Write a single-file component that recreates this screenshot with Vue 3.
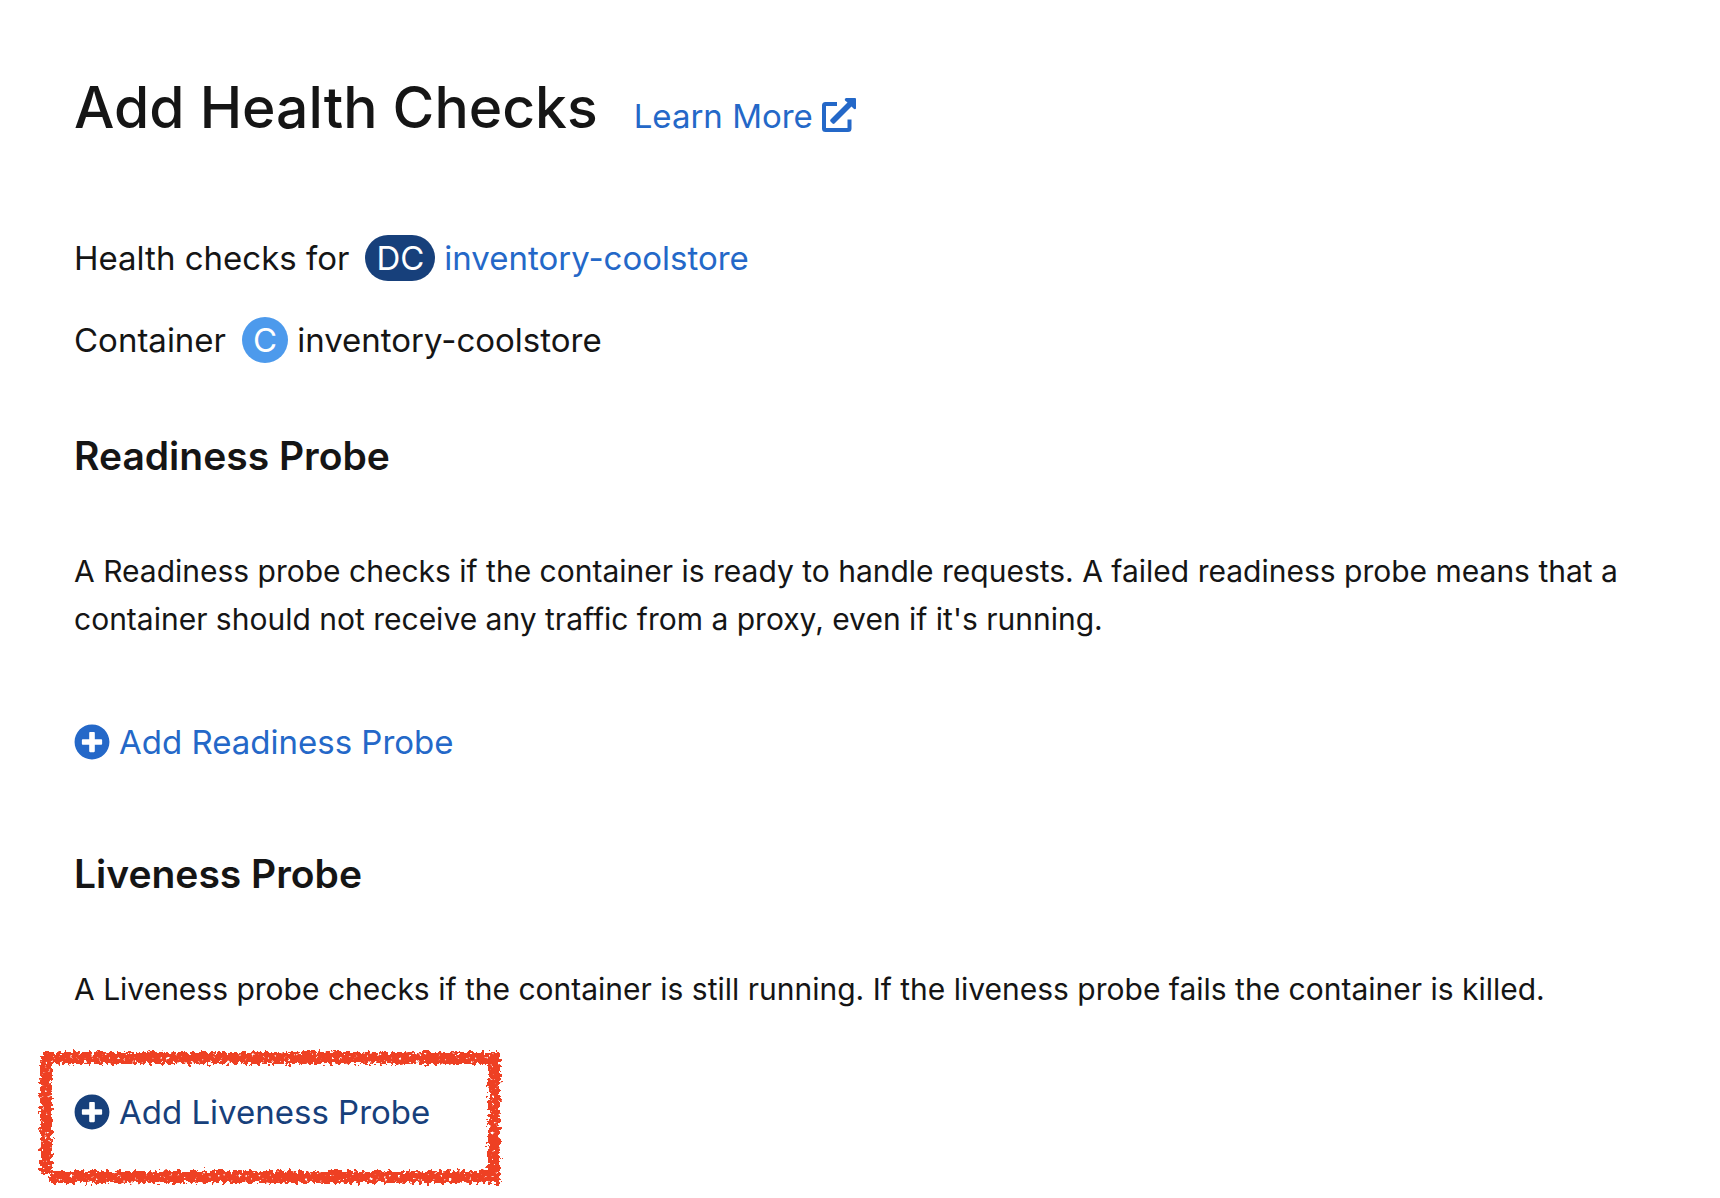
<script setup>
const resource = 'inventory-coolstore'

const probes = [
  {
    id: 'readiness',
    title: 'Readiness Probe',
    text: "A Readiness probe checks if the container is ready to handle requests. A failed readiness probe means that a container should not receive any traffic from a proxy, even if it's running.",
    action: 'Add Readiness Probe',
    marked: false
  },
  {
    id: 'liveness',
    title: 'Liveness Probe',
    text: 'A Liveness probe checks if the container is still running. If the liveness probe fails the container is killed.',
    action: 'Add Liveness Probe',
    marked: true
  }
]
</script>

<template>
  <main class="page">
    <header class="header">
      <h1 class="title">Add Health Checks</h1>
      <a class="learn" href="#">
        Learn More
        <svg class="learn-icon" viewBox="0 0 34 34" aria-hidden="true">
          <path
            d="M15 6H3.500Q2 6 2 7.500V30.500Q2 32 3.500 32H26Q27.500 32 27.500 30.500V21.500"
            fill="none"
            stroke="currentColor"
            stroke-width="4"
          />
          <path
            d="M24 0H33Q34 0 34 1V10.500Q33 12 31.500 10.500L29.500 8.500L12.500 25.500Q11.500 26.300 10.500 25.500L8.500 23.500Q7.700 22.500 8.500 21.500L25.500 4.500L23 2.500Q22 .8 24 0Z"
            fill="currentColor"
          />
        </svg>
      </a>
    </header>

    <div class="resources">
      <p class="resource">
        Health checks for
        <span class="badge badge-dc">DC</span>
        <a href="#">{{ resource }}</a>
      </p>
      <p class="resource">
        Container
        <span class="badge badge-c">C</span>
        <span>{{ resource }}</span>
      </p>
    </div>

    <section v-for="probe in probes" :key="probe.id" class="probe">
      <h2 class="probe-title">{{ probe.title }}</h2>
      <p class="probe-text">{{ probe.text }}</p>
      <div class="action">
        <button type="button" class="add" :class="{ active: probe.marked }">
          <svg class="add-icon" viewBox="0 0 512 512" aria-hidden="true">
            <path
              fill="currentColor"
              d="M256 8C119 8 8 119 8 256s111 248 248 248 248-111 248-248S393 8 256 8zm144 276c0 6.600-5.400 12-12 12h-92v92c0 6.600-5.400 12-12 12h-56c-6.600 0-12-5.400-12-12v-92h-92c-6.600 0-12-5.400-12-12v-56c0-6.600 5.400-12 12-12h92v-92c0-6.600 5.400-12 12-12h56c6.600 0 12 5.400 12 12v92h92c6.600 0 12 5.400 12 12v56z"
            />
          </svg>
          {{ probe.action }}
        </button>
        <svg
          v-if="probe.marked"
          class="marker"
          viewBox="0 0 472 144"
          preserveAspectRatio="none"
          aria-hidden="true"
        >
          <defs>
            <filter id="crayon" x="0" y="0" width="472" height="144" filterUnits="userSpaceOnUse" color-interpolation-filters="sRGB">
              <feTurbulence type="fractalNoise" baseFrequency="0.26" numOctaves="2" seed="7" result="grain" />
              <feDisplacementMap in="SourceGraphic" in2="grain" scale="10" xChannelSelector="R" yChannelSelector="G" result="rough" />
              <feTurbulence type="fractalNoise" baseFrequency="0.28" numOctaves="2" seed="21" />
              <feColorMatrix type="matrix" values="0 0 0 0 0  0 0 0 0 0  0 0 0 0 0  9 0 0 0 -2" result="holes" />
              <feComposite in="rough" in2="holes" operator="in" />
            </filter>
          </defs>
          <path
            filter="url(#crayon)"
            d="M10 12H466M460 8V138M466 131H15M12 127V9"
            fill="none"
            stroke="#ee4023"
            stroke-width="12"
          />
        </svg>
      </div>
    </section>
  </main>
</template>

<style>
body {
  margin: 0;
  background: #fff;
}
</style>

<style scoped>
.page {
  padding: 72px 74px 62px;
  font-family: Inter, "Liberation Sans", sans-serif;
  font-size: 33px;
  line-height: 48px;
  color: #151515;
}

h1,
h2,
p {
  margin: 0;
}

a {
  color: #2468c8;
  text-decoration: none;
}

.header {
  display: flex;
  align-items: baseline;
  gap: 36px;
}

.title {
  font-size: 57px;
  line-height: 72px;
  font-weight: 500;
}

.learn-icon {
  width: 34px;
  height: 34px;
  vertical-align: -4px;
}

.resources {
  display: flex;
  flex-direction: column;
  gap: 34px;
  margin-top: 90px;
}

.resource {
  display: flex;
  align-items: center;
  gap: 9px;
}

.badge {
  box-sizing: border-box;
  min-width: 46px;
  margin-left: 7px;
  padding: 0 11px;
  border-radius: 23px;
  line-height: 46px;
  text-align: center;
  color: #fff;
}

.badge-dc {
  background: #17407b;
}

.badge-c {
  background: #4d9aec;
}

.probe {
  margin-top: 84px;
}

.resources + .probe {
  margin-top: 68px;
}

.probe-title {
  font-size: 39px;
  font-weight: 600;
}

.probe-text {
  margin-top: 67px;
  font-size: 30px;
}

.action {
  position: relative;
  width: fit-content;
  margin-top: 75px;
}

.add {
  display: flex;
  align-items: center;
  gap: 9px;
  padding: 0;
  border: 0;
  background: none;
  font: inherit;
  color: #2468c8;
  cursor: pointer;
}

.add.active {
  color: #17407b;
}

.add-icon {
  width: 36px;
  height: 36px;
}

.marker {
  position: absolute;
  top: -42px;
  left: -40px;
  width: 472px;
  height: 144px;
  pointer-events: none;
}
</style>
